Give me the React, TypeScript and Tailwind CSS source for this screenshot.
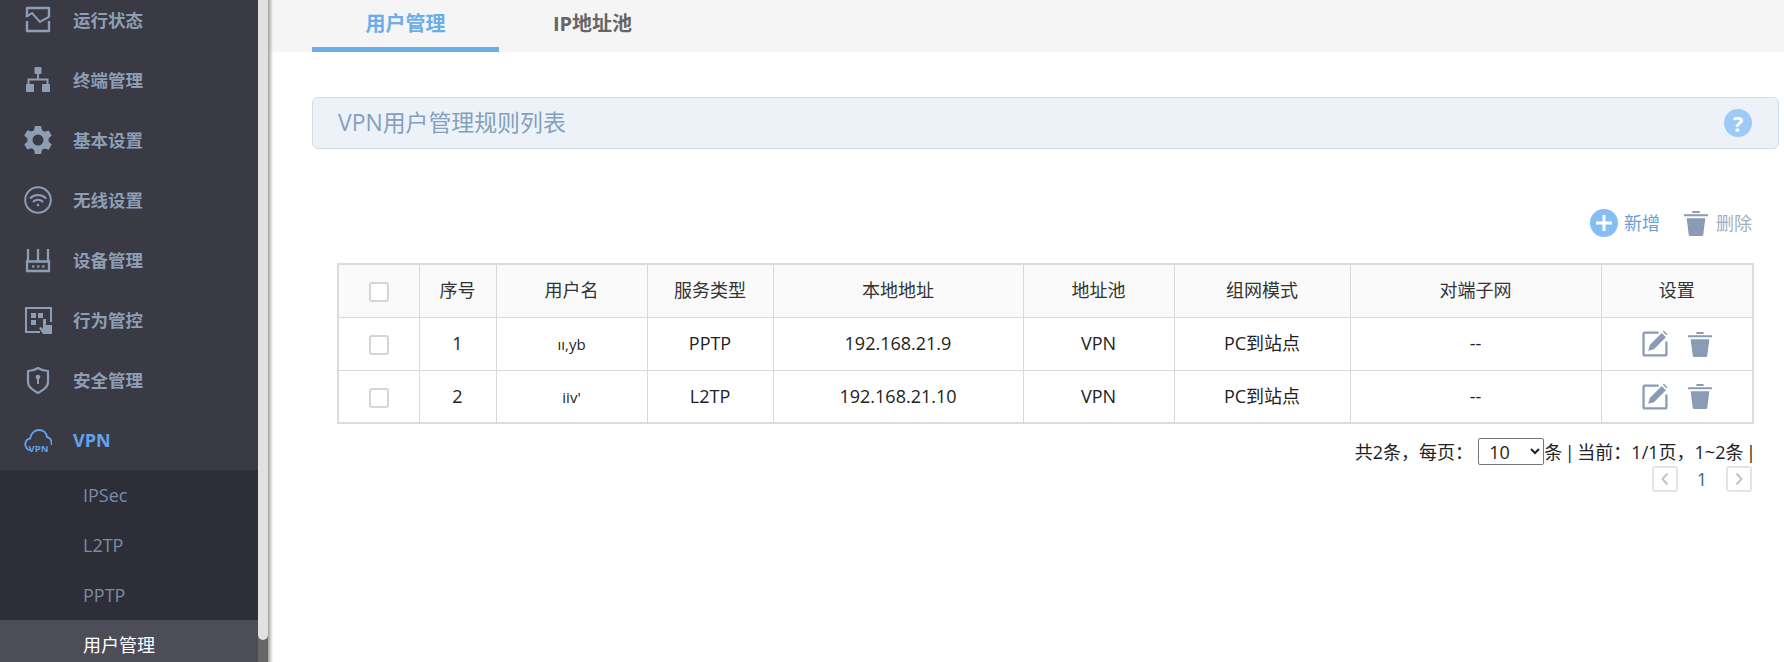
import React from 'react'

const font = "font-['Open_Sans','Noto_Sans_CJK_SC',sans-serif]"

function IconStatus() {
  return (
    <svg width="28" height="28" viewBox="0 0 28 28" fill="none" stroke="currentColor" strokeWidth="2.400">
      <path d="M3 11V2h22v9M3 15v10h22V15" strokeLinejoin="round" />
      <path d="M2 11l6-4 8 9 3-2 6-3" strokeWidth="2" />
    </svg>
  )
}

function IconTree() {
  return (
    <svg width="28" height="28" viewBox="0 0 28 28" fill="currentColor">
      <rect x="10.500" y="1" width="7" height="7" rx="1" />
      <rect x="2" y="18" width="8" height="8" rx="1" />
      <rect x="18" y="18" width="8" height="8" rx="1" />
      <path d="M13 8h2v4.500h9.500V19h-2v-4.500h-17V19h-2v-6.500H13z" />
    </svg>
  )
}

function IconGear() {
  return (
    <svg width="28" height="28" viewBox="0 0 28 28" fill="currentColor">
      <path
        fillRule="evenodd"
        d="M11 0h6l1 4.200 2.600 1.500 4.100-1.300 3 5.200-3.100 3 0 2.900 3.100 3-3 5.200-4.100-1.300L18 23.800 17 28h-6l-1-4.200-2.600-1.500-4.100 1.300-3-5.200 3.100-3 0-2.900-3.100-3 3-5.200 4.100 1.300L10 4.200zM14 8.500a5.500 5.500 0 1 0 0 11 5.500 5.500 0 0 0 0-11z"
      />
    </svg>
  )
}

function IconWifi() {
  return (
    <svg width="28" height="28" viewBox="0 0 28 28" fill="none" stroke="currentColor" strokeWidth="2">
      <circle cx="14" cy="14" r="12.800" />
      <path d="M6.500 12c4-4 11-4 15 0M9.500 15.500c2.500-2.500 6.500-2.500 9 0" strokeLinecap="round" />
      <circle cx="14" cy="19" r="1.300" fill="currentColor" stroke="none" />
    </svg>
  )
}

function IconRouter() {
  return (
    <svg width="28" height="28" viewBox="0 0 28 28" fill="none" stroke="currentColor" strokeWidth="2.300">
      <path d="M3 15.500h22v9.500H3zM4 15.500V3M14 15.500V3M24 15.500V3" />
      <path d="M8 20.500h2.500M13 20.500h2.500M18 20.500h2.500" strokeWidth="2" />
    </svg>
  )
}

function IconBehavior() {
  return (
    <svg width="28" height="28" viewBox="0 0 28 28" fill="none" stroke="currentColor" strokeWidth="2">
      <path d="M16 26H2V2h25v14" />
      <path d="M7 7h5v5H7zM14 7h5v5h-5zM7 14h5v5H7z" fill="currentColor" stroke="none" />
      <path d="M19 13h3v6h6v9h-9l-4-6 2-1 2 2z" fill="currentColor" stroke="none" />
    </svg>
  )
}

function IconShield() {
  return (
    <svg width="28" height="28" viewBox="0 0 28 28" fill="none" stroke="currentColor" strokeWidth="2.200">
      <path d="M4 5c4 0 7-1 10-3 3 2 6 3 10 3v11c0 5-5 8-10 11C9 24 4 21 4 16z" strokeLinejoin="round" />
      <circle cx="14" cy="11" r="2.300" fill="currentColor" stroke="none" />
      <rect x="13" y="12" width="2" height="6" fill="currentColor" stroke="none" />
    </svg>
  )
}

function IconVpn() {
  return (
    <svg width="28" height="28" viewBox="0 0 28 28" fill="none" stroke="currentColor" strokeWidth="1.800">
      <path d="M5 24C1 22 0 17 3 14c1-1 2-1.500 3-1.500C7 7 11 4 15 4c4.500 0 7.500 3 8 7 3 .5 5 3.500 4.500 7" strokeLinecap="round" />
      <text x="4.500" y="26" fontSize="9.500" fontWeight="700" fill="currentColor" stroke="none" fontFamily="Open Sans, sans-serif">
        VPN
      </text>
    </svg>
  )
}

function EditIcon() {
  return (
    <svg width="27" height="27" viewBox="0 0 26 26" fill="none">
      <path d="M16 2.500H2.500a1 1 0 0 0-1 1v20a1 1 0 0 0 1 1h20a1 1 0 0 0 1-1V11" stroke="#8a9bb3" strokeWidth="2.200" />
      <path d="M6 20l1.500-5.500L19 3l4 4L11.500 18.500z" fill="#8a9bb3" />
      <path d="M21 0.500l3.500 3.500-1 1L20 1.500z" fill="#8a9bb3" />
    </svg>
  )
}

function TrashIcon({ size = 26 }: { size?: number }) {
  return (
    <svg width={size} height={size} viewBox="0 0 24 25" fill="#8a9bb3">
      <path d="M0.500 4h23v2H0.500zM8.500 1h7v2h-7z" />
      <path d="M3 8h18l-2 15.500a1.500 1.500 0 0 1-1.500 1.500h-11A1.500 1.500 0 0 1 5 23.500z" />
    </svg>
  )
}

const menu = [
  { label: '运行状态', icon: <IconStatus /> },
  { label: '终端管理', icon: <IconTree /> },
  { label: '基本设置', icon: <IconGear /> },
  { label: '无线设置', icon: <IconWifi /> },
  { label: '设备管理', icon: <IconRouter /> },
  { label: '行为管控', icon: <IconBehavior /> },
  { label: '安全管理', icon: <IconShield /> },
]

const rows = [
  { id: 1, user: 'ıı,yb', type: 'PPTP', addr: '192.168.21.9', h: 'h-[53px]' },
  { id: 2, user: "iiv'", type: 'L2TP', addr: '192.168.21.10', h: 'h-[53px]' },
]

function Checkbox() {
  return <span className="inline-block w-[20px] h-[20px] rounded-[3px] border-2 border-[#d5d5d5] bg-white align-middle" />
}

function Sidebar() {
  return (
    <div className="flex w-[268px] h-[662px] shrink-0 overflow-hidden">
      <div className="w-[258px] bg-[#3a3a45] -mt-[10px]">
        {menu.map((m) => (
          <div key={m.label} className="flex items-center h-[60px] pl-[24px] text-[#8d9eb4]">
            <span className="w-[49px] flex">{m.icon}</span>
            <span className="text-[17.500px] font-bold tracking-normal">{m.label}</span>
          </div>
        ))}
        <div className="flex items-center h-[60px] pl-[24px] text-[#62a3ea]">
          <span className="w-[49px] flex">
            <IconVpn />
          </span>
          <span className="text-[18px] font-bold">VPN</span>
        </div>
        <div className="bg-[#2e2e38] text-[#7b8ca3] text-[18px]">
          <div className="h-[50px] flex items-center pl-[83px]">IPSec</div>
          <div className="h-[50px] flex items-center pl-[83px]">L2TP</div>
          <div className="h-[50px] flex items-center pl-[83px]">PPTP</div>
          <div className="h-[50px] flex items-center pl-[83px] bg-[#4d4d58] text-white">用户管理</div>
        </div>
      </div>
      <div className="w-[10px] bg-[#666666]">
        <div className="h-[640px] bg-[#e1e1e1] rounded-b-[5px]" />
      </div>
    </div>
  )
}

function Table() {
  const th = 'border border-[#d9d9d9] font-normal text-[#333] bg-[#fafafa]'
  const td = 'border border-[#d9d9d9] text-center text-[#222]'
  return (
    <table className="ml-[25px] w-[1415px] table-fixed border-collapse text-[18px] border-2 border-[#dcdcdc]">
      <colgroup>
        <col className="w-[81px]" />
        <col className="w-[77px]" />
        <col className="w-[151px]" />
        <col className="w-[126px]" />
        <col className="w-[250px]" />
        <col className="w-[151px]" />
        <col className="w-[176px]" />
        <col className="w-[251px]" />
        <col className="w-[152px]" />
      </colgroup>
      <thead>
        <tr className="h-[53px]">
          <th className={th}>
            <Checkbox />
          </th>
          {['序号', '用户名', '服务类型', '本地地址', '地址池', '组网模式', '对端子网', '设置'].map((h) => (
            <th key={h} className={th}>
              {h}
            </th>
          ))}
        </tr>
      </thead>
      <tbody>
        {rows.map((r) => (
          <tr key={r.id} className={r.h}>
            <td className={td}>
              <Checkbox />
            </td>
            <td className={td}>{r.id}</td>
            <td className={td}>
              <span className="text-[15px]">{r.user}</span>
            </td>
            <td className={td}>{r.type}</td>
            <td className={td}>{r.addr}</td>
            <td className={td}>VPN</td>
            <td className={td}>PC到站点</td>
            <td className={td}>--</td>
            <td className={td}>
              <div className="flex items-center justify-center gap-[18px] pl-[1px]">
                <EditIcon />
                <TrashIcon />
              </div>
            </td>
          </tr>
        ))}
      </tbody>
    </table>
  )
}

function Pager() {
  return (
    <div className="ml-[25px] w-[1415px] text-[18px] text-[#222]">
      <div className="flex items-center justify-end h-[36px] mt-[9px] -mr-[4px] [word-spacing:-2px]">
        <span className="mt-[2px]">共2条，每页：</span>
        <select className="ml-[5px] w-[66px] h-[27px] border border-[#767676] rounded-[2px] bg-white text-[18px] pl-[6px]" defaultValue="10">
          <option>10</option>
        </select>
        <span className="mt-[2px]">条 | 当前：1/1页，1~2条 |</span>
      </div>
      <div className="flex items-center justify-end h-[26px] -mt-[3px]">
        <span className="w-[26px] h-[26px] rounded-[3px] border-2 border-[#e4e4e4] flex items-center justify-center text-[#c4c4c4]">
          <svg width="10" height="14" viewBox="0 0 10 14" fill="none" stroke="currentColor" strokeWidth="2">
            <path d="M7.500 1.500L2.500 7l5 5.500" />
          </svg>
        </span>
        <span className="w-[48px] text-center text-[#30689c]">1</span>
        <span className="w-[26px] h-[26px] rounded-[3px] border-2 border-[#e4e4e4] flex items-center justify-center text-[#c4c4c4]">
          <svg width="10" height="14" viewBox="0 0 10 14" fill="none" stroke="currentColor" strokeWidth="2">
            <path d="M2.500 1.500L7.500 7l-5 5.500" />
          </svg>
        </span>
      </div>
    </div>
  )
}

export default function App() {
  return (
    <div className={`flex h-[662px] overflow-hidden bg-white ${font}`}>
      <Sidebar />
      <div className="flex-1 min-w-0 relative pl-[44px]">
        <div className="absolute left-0 right-0 top-0 h-[52px] bg-[#f5f5f5]" />
        <div className="absolute left-0 top-0 bottom-0 w-[5px] bg-gradient-to-r from-[#a0a0a0] to-transparent" />
        <div className="relative flex h-[52px]">
          <div className="w-[187px] h-[52px] border-b-[5px] border-[#6cade9] flex items-center justify-center text-[20px] font-bold text-[#6cade9]">
            用户管理
          </div>
          <div className="w-[187px] h-[52px] pb-[5px] flex items-center justify-center text-[20px] font-bold text-[#666666]">
            IP地址池
          </div>
        </div>
        <div className="mt-[45px] w-[1467px] h-[52px] rounded-[6px] border border-[#d3dde8] bg-[#edf2f9] flex items-center justify-between pl-[25px] pr-[26px]">
          <span className="text-[22.900px] text-[#83a0bd]">VPN用户管理规则列表</span>
          <span className="w-[28px] h-[28px] rounded-full bg-[#9ccbf8] text-white font-bold text-[22px] flex items-center justify-center">
            ?
          </span>
        </div>
        <div className="mt-[60px] w-[1440px] h-[28px] flex items-center justify-end text-[18px]">
          <svg width="28" height="28" viewBox="0 0 28 28">
            <circle cx="14" cy="14" r="14" fill="#85bdf4" />
            <path d="M14 6v16M6 14h16" stroke="#fff" strokeWidth="3" />
          </svg>
          <span className="ml-[6px] text-[#6a9ed4]">新增</span>
          <span className="ml-[23px] flex">
            <TrashIcon />
          </span>
          <span className="ml-[7px] text-[#a3afbf]">删除</span>
        </div>
        <div className="mt-[26px]">
          <Table />
          <Pager />
        </div>
      </div>
    </div>
  )
}
